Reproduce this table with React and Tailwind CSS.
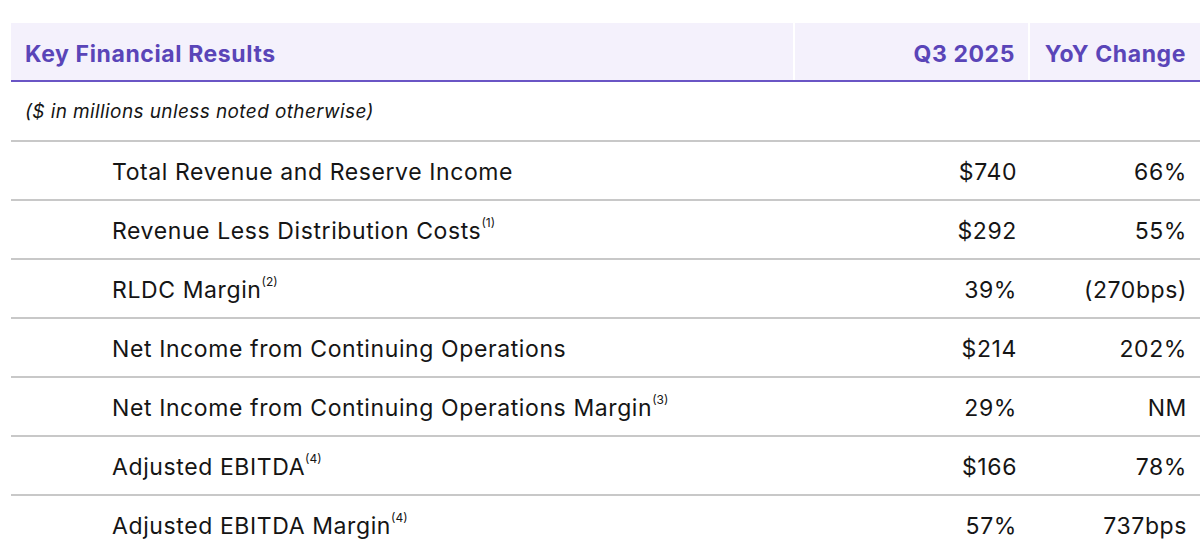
const rows = [
  { label: "Total Revenue and Reserve Income", note: null, q3: "$740", yoy: "66%" },
  { label: "Revenue Less Distribution Costs", note: "(1)", q3: "$292", yoy: "55%" },
  { label: "RLDC Margin", note: "(2)", q3: "39%", yoy: "(270bps)" },
  { label: "Net Income from Continuing Operations", note: null, q3: "$214", yoy: "202%" },
  { label: "Net Income from Continuing Operations Margin", note: "(3)", q3: "29%", yoy: "NM" },
  { label: "Adjusted EBITDA", note: "(4)", q3: "$166", yoy: "78%" },
  { label: "Adjusted EBITDA Margin", note: "(4)", q3: "57%", yoy: "737bps" },
];

export default function App() {
  return (
    <div className="w-[1200px] h-[548px] overflow-hidden bg-white pt-[23px] pl-[11px] font-['Inter',sans-serif]">
      {/* Header */}
      <div className="grid grid-cols-[784px_235px_170px] h-[59px] bg-[#f4f1fc] border-b-2 border-[#6a55c5] text-[#5a45b8] font-bold text-[23px] tracking-[0.6px]">
        <div className="flex items-center pt-[5px] pl-[14px] border-r-2 border-white">Key Financial Results</div>
        <div className="flex items-center justify-end pt-[5px] pr-[13px] border-r-2 border-white">Q3 2025</div>
        <div className="flex items-center justify-end pt-[5px] pr-[14px]">YoY Change</div>
      </div>

      {/* Subtitle */}
      <div className="h-[60px] flex items-center pt-[2px] pl-[14px] border-b-2 border-[#c8c8c8] italic text-[19px] tracking-[0.4px] text-[#151515]">
        ($ in millions unless noted otherwise)
      </div>

      {/* Rows */}
      {rows.map((row) => (
        <div
          key={row.label}
          className="grid grid-cols-[784px_235px_170px] h-[59px] border-b-2 border-[#c8c8c8] text-[23px] tracking-[0.6px] text-[#151515]"
        >
          <div className="flex items-center pt-[3px] pl-[101px]">
            {row.label}
            {row.note && <sup className="text-[12px] tracking-normal -top-[0.7em]">{row.note}</sup>}
          </div>
          <div className="flex items-center justify-end pt-[3px] pr-[13px]">{row.q3}</div>
          <div className="flex items-center justify-end pt-[3px] pr-[13px]">{row.yoy}</div>
        </div>
      ))}
    </div>
  );
}
